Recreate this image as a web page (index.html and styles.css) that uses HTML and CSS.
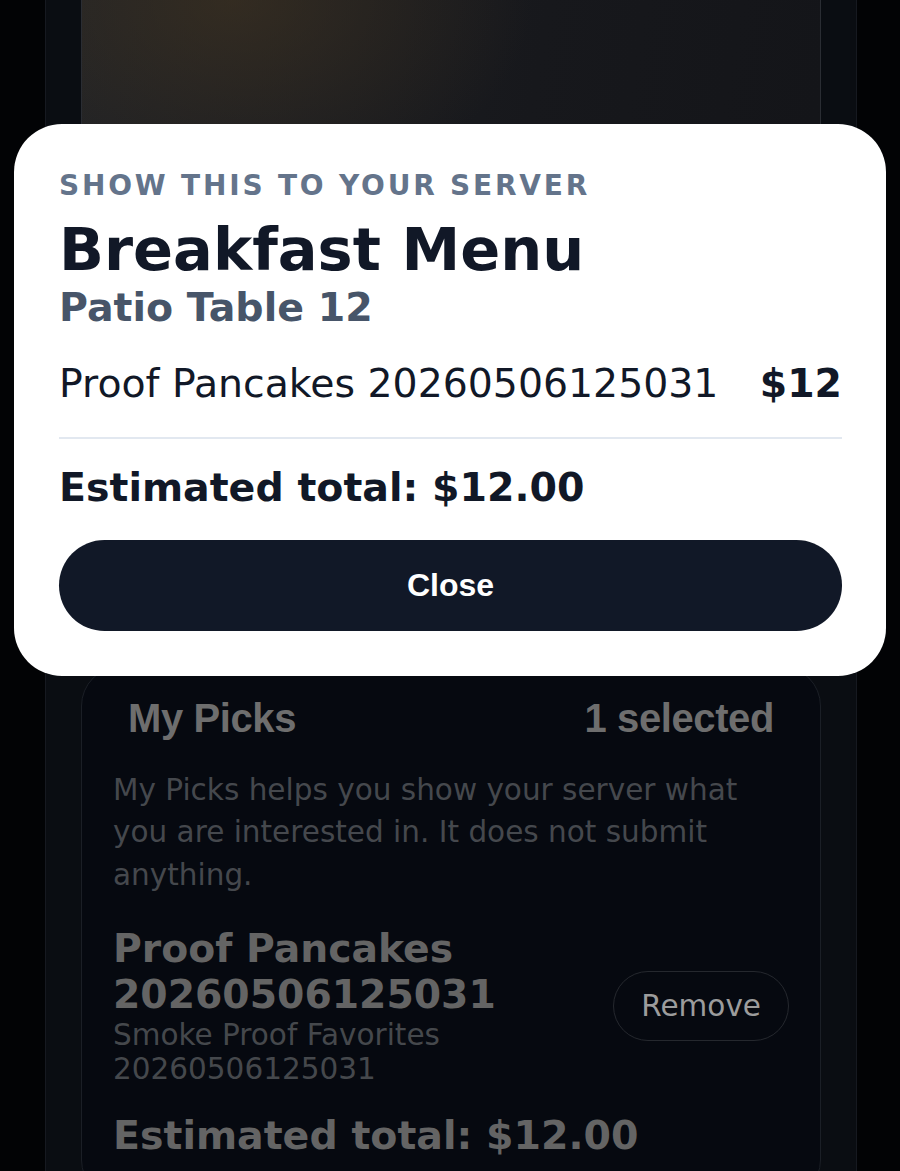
FILE: index.html
```html
<!DOCTYPE html>
<html lang="en">

<head>
    <meta charset="UTF-8">
    <meta name="viewport" content="width=device-width, initial-scale=1.0">
    <title>Breakfast Menu</title>
    <link rel="stylesheet" href="styles.css">
</head>

<body>
    <div class="shell">
        <div class="hero"></div>

        <section class="picks">
            <div class="picks-head">
                <span>My Picks</span>
                <span>1 selected</span>
            </div>
            <p class="picks-note">My Picks helps you show your server what you are interested in. It does not submit anything.</p>

            <div class="pick">
                <div class="pick-text">
                    <div class="pick-name">Proof Pancakes 20260506125031</div>
                    <div class="pick-from">Smoke Proof Favorites 20260506125031</div>
                </div>
                <button class="remove" type="button">Remove</button>
            </div>

            <p class="picks-total">Estimated total: $12.00</p>
        </section>
    </div>

    <div class="backdrop">
        <div class="sheet">
            <p class="sheet-label">SHOW THIS TO YOUR SERVER</p>
            <h1 class="sheet-title">Breakfast Menu</h1>
            <p class="sheet-table">Patio Table 12</p>
            <div class="sheet-item">
                <span>Proof Pancakes 20260506125031</span>
                <strong>$12</strong>
            </div>
            <p class="sheet-total">Estimated total: $12.00</p>
            <button class="close" type="button">Close</button>
        </div>
    </div>
</body>

</html>
```

FILE: styles.css
```css
body {
    margin: 0;
    height: 1171px;
    overflow: hidden;
    background: #020305;
    font-family: "DejaVu Sans", sans-serif;
}

.shell {
    margin: 0 43px 0 45px;
    padding: 0 35px;
    min-height: 1171px;
    background: #0a0d12;
    border-left: 1px solid #161920;
    border-right: 1px solid #161920;
}

.hero {
    height: 640px;
    border: 1px solid #2a2d33;
    border-top: 0;
    background:
        radial-gradient(ellipse 300px 200px at 150px 0, rgba(66, 52, 32, 0.6), rgba(66, 52, 32, 0)),
        linear-gradient(100deg, #202226, #17181c 55%, #131418);
}

/* my picks card, dimmed behind the sheet */
.picks {
    margin-top: 25px;
    padding: 27px 31px 40px;
    background: #060910;
    border: 1px solid #1b1f26;
    border-radius: 40px;
}

.picks-head {
    display: flex;
    justify-content: space-between;
    padding: 0 15px;
    font-family: "Liberation Sans", Arial, sans-serif;
    font-weight: 700;
    font-size: 40px;
    line-height: 48px;
    letter-spacing: -0.01em;
    color: #6e6e6e;
}

.picks-note {
    margin: 27px 0 0;
    font-size: 29.5px;
    line-height: 42.4px;
    color: #45484d;
}

.pick {
    display: flex;
    align-items: center;
    justify-content: space-between;
    gap: 24px;
    margin-top: 30px;
}

.pick-text {
    flex: 1;
    min-width: 0;
}

.pick-name {
    font-weight: 700;
    font-size: 39.3px;
    line-height: 45.7px;
    color: #646464;
}

.pick-from {
    font-size: 29.5px;
    line-height: 34px;
    color: #45484c;
}

.remove {
    flex-shrink: 0;
    height: 70px;
    padding: 0 27px;
    background: transparent;
    border: 1px solid #25282e;
    border-radius: 999px;
    font-family: "DejaVu Sans", sans-serif;
    font-size: 29.5px;
    color: #9c9c9c;
}

.picks-total {
    margin: 25px 0 0;
    font-weight: 700;
    font-size: 39.5px;
    line-height: 48px;
    color: #646464;
}

/* the sheet shown to the server */
.backdrop {
    position: fixed;
    inset: 0;
}

.sheet {
    position: absolute;
    top: 124px;
    left: 14px;
    right: 14px;
    padding: 45px 44px 45px 45px;
    background: #fff;
    border-radius: 48px;
    color: #111827;
}

.sheet-label {
    margin: 0;
    font-size: 28px;
    line-height: 33.6px;
    font-weight: 700;
    letter-spacing: 0.1em;
    color: #64748b;
}

.sheet-title {
    margin: 13px 0 0;
    font-size: 59px;
    line-height: 68px;
    font-weight: 700;
}

.sheet-table {
    margin: 1px 0 0;
    font-size: 39.5px;
    line-height: 45.6px;
    font-weight: 700;
    color: #475569;
}

.sheet-item {
    display: flex;
    justify-content: space-between;
    margin-top: 26px;
    padding-bottom: 26px;
    border-bottom: 2px solid #e2e8f0;
    font-size: 39.4px;
    line-height: 54.6px;
}

.sheet-total {
    margin: 24px 0 0;
    font-size: 39.5px;
    line-height: 48px;
    font-weight: 700;
}

.close {
    display: block;
    width: 100%;
    height: 91px;
    margin-top: 29px;
    border: 0;
    border-radius: 999px;
    background: #111827;
    color: #fff;
    font-family: "Liberation Sans", Arial, sans-serif;
    font-weight: 700;
    font-size: 32px;
}
```
